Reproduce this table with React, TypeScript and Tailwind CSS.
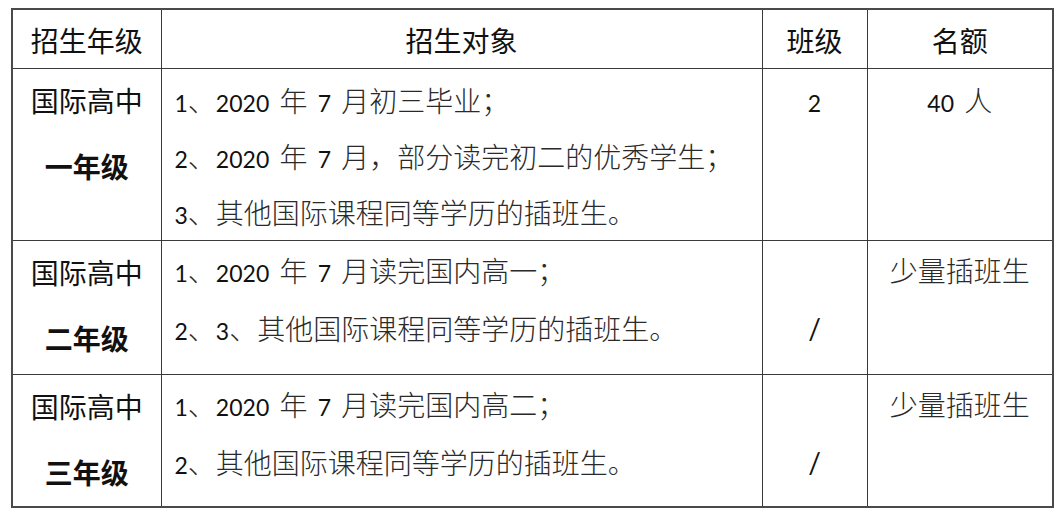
import React from "react";

const L = ({ children }: { children: React.ReactNode }) => (
  <span className="font-['Lato',sans-serif] font-normal text-[23px] text-[#111]">{children}</span>
);

const cjk = "font-['Noto_Sans_CJK_SC',sans-serif]";

function Label({ top, bottom }: { top: string; bottom: string }) {
  return (
    <div className={`flex flex-col items-center ${cjk} text-[28px] text-[#111]`}>
      <div className="mt-[11px] h-[40px] leading-[40px] whitespace-nowrap">{top}</div>
      <div className="mt-[26px] h-[40px] leading-[40px] font-bold whitespace-nowrap">{bottom}</div>
    </div>
  );
}

function Line({ h, children }: { h: string; children: React.ReactNode }) {
  return <div className={`${h} overflow-visible whitespace-nowrap`}>{children}</div>;
}

export default function App() {
  const td = "border border-[#3a3a3a] align-top p-0";
  const body = `${cjk} text-[28px] text-[#2a2a2a] font-light [word-spacing:4px]`;
  const head = `border border-[#3a3a3a] p-0 align-middle text-center ${cjk} text-[28px] text-[#111]`;
  return (
    <div className="bg-white w-[1064px] h-[514px] pt-[8px] pl-[11px]">
      <table className="border-collapse border-2 border-[#4a4a4a] table-fixed w-[1041px]">
        <colgroup>
          <col className="w-[149px]" />
          <col className="w-[601px]" />
          <col className="w-[105px]" />
          <col className="w-[186px]" />
        </colgroup>
        <tbody>
          <tr className="h-[59px]">
            <td className={head}>
              <div className="pt-[3px] h-[56px] leading-[52px]">招生年级</div>
            </td>
            <td className={head}>
              <div className="pt-[3px] h-[56px] leading-[52px]">招生对象</div>
            </td>
            <td className={head}>
              <div className="pt-[3px] h-[56px] leading-[52px]">班级</div>
            </td>
            <td className={head}>
              <div className="pt-[3px] h-[56px] leading-[52px]">名额</div>
            </td>
          </tr>
          <tr className="h-[171px]">
            <td className={td}>
              <Label top="国际高中" bottom="一年级" />
            </td>
            <td className={td}>
              <div className={`${body} pt-[3px] pl-[13px] leading-[56px]`}>
                <Line h="h-[56px]">
                  <L>1</L>、<L>2020</L> 年 <L>7</L> 月初三毕业；
                </Line>
                <Line h="h-[56px]">
                  <L>2</L>、<L>2020</L> 年 <L>7</L> 月，部分读完初二的优秀学生；
                </Line>
                <Line h="h-[56px]">
                  <L>3</L>、其他国际课程同等学历的插班生。
                </Line>
              </div>
            </td>
            <td className={td}>
              <div className={`${body} pt-[3px] h-[59px] leading-[56px] text-center`}>
                <L>2</L>
              </div>
            </td>
            <td className={td}>
              <div className={`${body} pt-[3px] h-[59px] leading-[56px] text-center`}>
                <L>40</L> 人
              </div>
            </td>
          </tr>
          <tr className="h-[134px]">
            <td className={td}>
              <Label top="国际高中" bottom="二年级" />
            </td>
            <td className={td}>
              <div className={`${body} pl-[13px] leading-[58px]`}>
                <Line h="h-[58px]">
                  <L>1</L>、<L>2020</L> 年 <L>7</L> 月读完国内高一；
                </Line>
                <Line h="h-[58px]">
                  <L>2</L>、<L>3</L>、其他国际课程同等学历的插班生。
                </Line>
              </div>
            </td>
            <td className={td}>
              <div className={`${body} leading-[58px] text-center`}>
                <div className="h-[58px]" />
                <div className="h-[58px] font-['Lato',sans-serif] font-normal text-[28px] text-[#111]">/</div>
              </div>
            </td>
            <td className={td}>
              <div className={`${body} h-[58px] leading-[58px] text-center whitespace-nowrap`}>少量插班生</div>
            </td>
          </tr>
          <tr className="h-[133px]">
            <td className={td}>
              <Label top="国际高中" bottom="三年级" />
            </td>
            <td className={td}>
              <div className={`${body} pl-[13px] leading-[58px]`}>
                <Line h="h-[58px]">
                  <L>1</L>、<L>2020</L> 年 <L>7</L> 月读完国内高二；
                </Line>
                <Line h="h-[58px]">
                  <L>2</L>、其他国际课程同等学历的插班生。
                </Line>
              </div>
            </td>
            <td className={td}>
              <div className={`${body} leading-[58px] text-center`}>
                <div className="h-[58px]" />
                <div className="h-[58px] font-['Lato',sans-serif] font-normal text-[28px] text-[#111]">/</div>
              </div>
            </td>
            <td className={td}>
              <div className={`${body} h-[58px] leading-[58px] text-center whitespace-nowrap`}>少量插班生</div>
            </td>
          </tr>
        </tbody>
      </table>
    </div>
  );
}
